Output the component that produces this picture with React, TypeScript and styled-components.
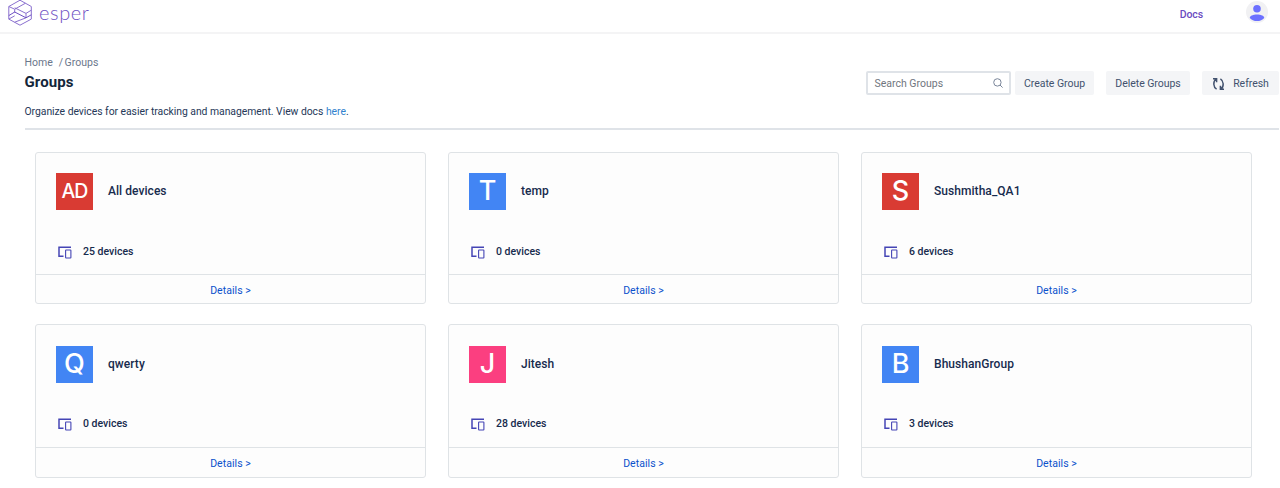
import React from 'react';
import styled, { createGlobalStyle } from 'styled-components';

const GlobalStyle = createGlobalStyle`
  * { box-sizing: border-box; }
  body {
    margin: 0;
    background: #fff;
    color: #172b4d;
    font-family: Roboto, "Liberation Sans", sans-serif;
    overflow: hidden;
  }
`;

const Page = styled.div`
  height: 488px;
  overflow: hidden;
`;

const Header = styled.header`
  display: flex;
  align-items: flex-start;
  height: 34px;
  padding: 0 12px 0 8px;
  border-bottom: 2px solid #f4f4f5;
`;

const Brand = styled.div`
  display: flex;
  flex: 1;
`;

const Wordmark = styled.span`
  margin: -2px 0 0 7px;
  font: 300 20px/28px Lato, sans-serif;
  letter-spacing: 0.6px;
  color: #6f52c4;
`;

const DocsLink = styled.a`
  margin: 7px 43px 0 0;
  font-size: 10.5px;
  font-weight: 500;
  line-height: 15px;
  letter-spacing: -0.1px;
  color: #6a4bbf;
`;

const Main = styled.main`
  padding: 21px 1px 0 24.5px;
`;

const TitleBar = styled.section`
  display: flex;
  height: 75px;
  border-bottom: 2px solid #dfe3e8;
`;

const Intro = styled.div`
  flex: 1;
`;

const Breadcrumb = styled.nav`
  display: flex;
  gap: 6px;
  font-size: 10.5px;
  line-height: 15px;
  color: #6b778c;
`;

const Crumb = styled.span`
  display: flex;
  gap: 1.5px;
`;

const Title = styled.h1`
  margin: 1px 0 0;
  font-size: 15px;
  font-weight: 700;
  line-height: 22px;
  letter-spacing: 0.1px;
  color: #13263a;
`;

const Description = styled.p`
  margin: 11px 0 0;
  font-size: 10.4px;
  line-height: 15px;
  letter-spacing: -0.04px;
  color: #253858;
`;

const InlineLink = styled.a`
  color: #3182ce;
`;

const Actions = styled.div`
  display: flex;
  padding-top: 16px;
`;

const SearchBox = styled.div`
  display: flex;
  align-items: center;
  justify-content: space-between;
  width: 145px;
  height: 24px;
  margin-right: 4px;
  padding: 0 6px 0 6.5px;
  border: 2px solid #dfe3e8;
  border-radius: 2px;
  font-size: 10.5px;
  color: #70757e;
`;

const Button = styled.button<{ $width: number; $gap?: number }>`
  display: flex;
  align-items: center;
  justify-content: center;
  gap: 8px;
  width: ${(p) => p.$width}px;
  height: 24px;
  margin-right: ${(p) => p.$gap ?? 0}px;
  padding: 1px 0 0;
  border: 0;
  border-radius: 2px;
  background: #f4f5f7;
  font: 400 10.5px/16px Roboto, sans-serif;
  letter-spacing: -0.04px;
  color: #42526e;
  white-space: nowrap;
`;

const Grid = styled.section`
  display: grid;
  grid-template-columns: repeat(3, 391px);
  grid-template-rows: 152px 154px;
  gap: 20px 22px;
  padding: 22px 0 0 10.5px;
`;

const CardBody = styled.div`
  display: flex;
  flex: 1;
  flex-direction: column;
  justify-content: space-between;
  padding: 20px 20px 14px;
`;

const CardFooter = styled.a`
  display: flex;
  align-items: center;
  justify-content: center;
  height: 29px;
  padding-top: 3px;
  border-top: 1px solid #dfe3e6;
  font-size: 10.5px;
  letter-spacing: 0.05px;
  color: #0b52cc;
`;

const Card = styled.article`
  display: flex;
  flex-direction: column;
  border: 1px solid #dfe3e6;
  border-radius: 3px;
  background: #fdfdfd;

  &:nth-child(n + 4) {
    ${CardBody} {
      padding: 21px 20px 15px;
    }
    ${CardFooter} {
      height: 30px;
      padding-top: 2px;
    }
  }
`;

const CardHead = styled.div`
  display: flex;
  align-items: center;
  gap: 15px;
`;

const Avatar = styled.div<{ $color: string; $small: boolean }>`
  width: 37px;
  height: 37px;
  background: ${(p) => p.$color};
  font: ${(p) => (p.$small ? '500 19.5px/37px' : '500 27px/36px')} Inter, sans-serif;
  letter-spacing: ${(p) => (p.$small ? '-1px' : '0')};
  text-align: center;
  color: #fff;
`;

const GroupName = styled.h2`
  margin: -1px 0 0;
  font-size: 12px;
  font-weight: 500;
  line-height: 18px;
  letter-spacing: 0.05px;
`;

const DeviceCount = styled.div`
  display: flex;
  align-items: center;
  gap: 11px;
  padding-left: 1px;
  font-size: 10.5px;
  font-weight: 500;
  line-height: 16px;
`;

const Logo = () => (
  <svg width="24" height="27" viewBox="0 0 24 27" fill="none" stroke="#8a70cf" strokeWidth="1" strokeLinejoin="round">
    <path d="M12 .2 23.300 6.500v12.600L12 25.200.8 19.100V6.500Z" />
    <path d="M.8 6.500 6.700 9.200 17.300 3.300M6.700 9.200v3.500M6.700 7.800 18 13.400l5.300-3.200M18 13.400v4.400M.8 19.100l5.900-3.300M6.700 22.200 18 17.800" />
    <path d="M.8 15.600 6.700 12 18 17.800l5.300-3" stroke="#6f52c4" />
  </svg>
);

const UserIcon = () => (
  <svg width="22" height="24" viewBox="0 0 22 24">
    <circle cx="11" cy="12" r="11" fill="#f1f1f3" />
    <circle cx="11" cy="8.8" r="3.8" fill="#6c70ff" />
    <path d="M3.800 18c0-2.200 3.400-3.400 7.200-3.400s7.200 1.200 7.200 3.400c-1.500 2-4.300 3.100-7.200 3.100S5.300 20 3.800 18Z" fill="#6c70ff" />
  </svg>
);

const SearchIcon = () => (
  <svg width="10" height="10" viewBox="0 0 10 10" fill="none" stroke="#7a869a" strokeWidth="1">
    <circle cx="4.400" cy="4.400" r="3.700" />
    <path d="m7 7 2.600 2.600" />
  </svg>
);

const RefreshIcon = () => (
  <svg width="13" height="14" viewBox="0 0 13 14" fill="none" stroke="#42526e" strokeWidth="1.500">
    <path d="M4.600 12.200C1.200 10.200.8 4.500 4 2M1 1.700h3.600v3.600M8.400 1.800c3.400 2 3.800 7.700.6 10.200M12 12.300H8.400V8.700" />
  </svg>
);

const DevicesIcon = () => (
  <svg width="15" height="13" viewBox="0 0 15 13" fill="none" stroke="#4545b5">
    <path d="M14 1.300H2V10.200H6.500" strokeWidth="1.500" />
    <rect x="8.600" y="4" width="5.300" height="8" rx=".5" strokeWidth="1.100" />
  </svg>
);

const groups = [
  { name: 'All devices', initials: 'AD', color: '#d93b33', devices: 25 },
  { name: 'temp', initials: 'T', color: '#4285f4', devices: 0 },
  { name: 'Sushmitha_QA1', initials: 'S', color: '#d93b33', devices: 6 },
  { name: 'qwerty', initials: 'Q', color: '#4285f4', devices: 0 },
  { name: 'Jitesh', initials: 'J', color: '#fb3f80', devices: 28 },
  { name: 'BhushanGroup', initials: 'B', color: '#4285f4', devices: 3 },
];

export default function App() {
  return (
    <Page>
      <GlobalStyle />
      <Header>
        <Brand>
          <Logo />
          <Wordmark>esper</Wordmark>
        </Brand>
        <DocsLink>Docs</DocsLink>
        <UserIcon />
      </Header>
      <Main>
        <TitleBar>
          <Intro>
            <Breadcrumb>
              <Crumb>Home</Crumb>
              <Crumb>
                <span>/</span>
                <span>Groups</span>
              </Crumb>
            </Breadcrumb>
            <Title>Groups</Title>
            <Description>
              Organize devices for easier tracking and management. View docs <InlineLink>here</InlineLink>.
            </Description>
          </Intro>
          <Actions>
            <SearchBox>
              Search Groups
              <SearchIcon />
            </SearchBox>
            <Button $width={79} $gap={12}>Create Group</Button>
            <Button $width={84} $gap={12}>Delete Groups</Button>
            <Button $width={77}>
              <RefreshIcon />
              Refresh
            </Button>
          </Actions>
        </TitleBar>
        <Grid>
          {groups.map((g) => (
            <Card key={g.name}>
              <CardBody>
                <CardHead>
                  <Avatar $color={g.color} $small={g.initials.length > 1}>{g.initials}</Avatar>
                  <GroupName>{g.name}</GroupName>
                </CardHead>
                <DeviceCount>
                  <DevicesIcon />
                  {g.devices} devices
                </DeviceCount>
              </CardBody>
              <CardFooter>Details &gt;</CardFooter>
            </Card>
          ))}
        </Grid>
      </Main>
    </Page>
  );
}
